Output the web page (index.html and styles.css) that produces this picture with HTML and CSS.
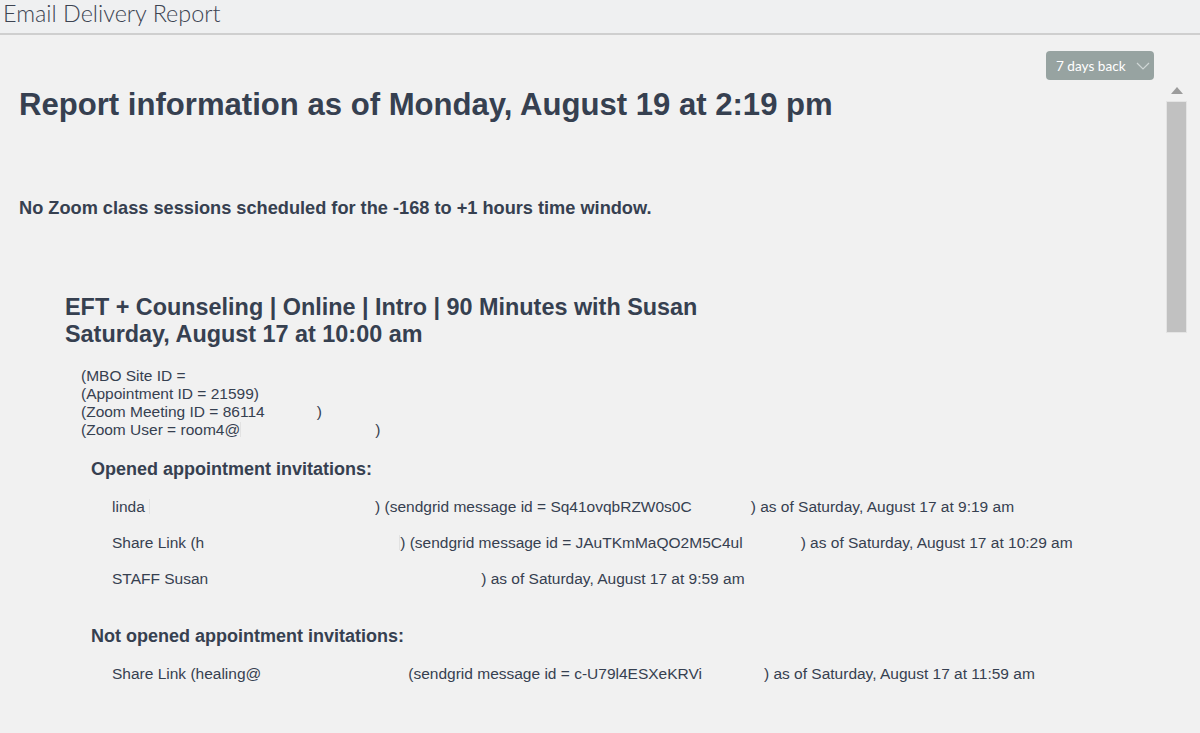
FILE: index.html
```html
<!DOCTYPE html>
<html lang="en">
<head>
    <meta charset="UTF-8">
    <meta name="viewport" content="width=device-width, initial-scale=1.0">
    <title>Email Delivery Report</title>
    <link rel="stylesheet" href="styles.css">
</head>
<body>
    <header class="page-header">Email Delivery Report</header>

    <div class="toolbar">
        <button class="range-select" type="button">
            <span>7 days back</span>
            <svg class="chevron" width="14" height="8" viewBox="0 0 14 8"><path d="M1 1l6 6 6-6" fill="none" stroke="currentColor" stroke-width="1.2"/></svg>
        </button>
    </div>

    <div class="workspace">
        <main class="report-pane">
            <h1>Report information as of Monday, August 19 at 2:19 pm</h1>

            <p class="notice">No Zoom class sessions scheduled for the -168 to +1 hours time window.</p>

            <section class="appointment">
                <h2>EFT + Counseling | Online | Intro | 90 Minutes with Susan<br>Saturday, August 17 at 10:00 am</h2>

                <div class="ids">
                    <div>(MBO Site ID = </div>
                    <div>(Appointment ID = 21599)</div>
                    <div>(Zoom Meeting ID = 86114<span class="blank" style="width:52px"></span>)</div>
                    <div>(Zoom User = room4@<span class="blank edge" style="width:135px"></span>)</div>
                </div>

                <h3>Opened appointment invitations:</h3>
                <ul class="invites">
                    <li>linda <span class="blank edge" style="width:226px"></span>) (sendgrid message id = Sq41ovqbRZW0s0C<span class="blank" style="width:59px"></span>) as of Saturday, August 17 at 9:19 am</li>
                    <li>Share Link (h<span class="blank smudge" style="width:196px"></span>) (sendgrid message id = JAuTKmMaQO2M5C4ul<span class="blank" style="width:58px"></span>) as of Saturday, August 17 at 10:29 am</li>
                    <li>STAFF Susan<span class="blank" style="width:273px"></span>) as of Saturday, August 17 at 9:59 am</li>
                </ul>

                <h3>Not opened appointment invitations:</h3>
                <ul class="invites">
                    <li>Share Link (healing@<span class="blank" style="width:147px"></span>(sendgrid message id = c-U79l4ESXeKRVi<span class="blank" style="width:62px"></span>) as of Saturday, August 17 at 11:59 am</li>
                </ul>
            </section>
        </main>

        <!-- report scroller: up arrow + thumb -->
        <div class="scroll-rail">
            <svg class="scroll-up" width="12" height="7" viewBox="0 0 12 7"><path d="M0 7L6 0l6 7z" fill="#9c9c9c"/></svg>
            <div class="scroll-thumb"></div>
        </div>
    </div>
</body>
</html>
```

FILE: styles.css
```css
html, body {
    height: 100%;
}
body {
    margin: 0;
    display: flex;
    flex-direction: column;
    overflow: hidden;
    font-family: "Liberation Sans", Arial, sans-serif;
    background-color: #f1f1f1;
    color: #364050;
}

/* top bar */
.page-header {
    height: 33px;
    padding-left: 3px;
    border-bottom: 2px solid #cfcfcf;
    font-family: Lato, "Open Sans", sans-serif;
    font-weight: 300;
    font-size: 23.4px;
    line-height: 27px;
    color: #3d4452;
    background-color: #eff0f1;
}

.toolbar {
    display: flex;
    justify-content: flex-end;
    padding: 16px 46px 0 0;
    height: 29px;
}
.range-select {
    display: flex;
    align-items: center;
    gap: 10px;
    width: 108px;
    height: 29px;
    padding: 0 0 0 10px;
    border: none;
    border-radius: 4px;
    background-color: #97a3a1;
    color: #fff;
    font-family: Lato, "Open Sans", sans-serif;
    font-size: 13.6px;
    cursor: pointer;
}
.chevron {
    color: #cfd6d5;
}

/* report area with its scroller */
.workspace {
    flex: 1;
    display: flex;
    min-height: 0;
}
.report-pane {
    flex: 1;
    overflow: hidden;
    padding: 7px 0 0 19px;
}
.scroll-rail {
    width: 21px;
    margin-right: 13px;
    display: flex;
    flex-direction: column;
    align-items: center;
}
.scroll-up {
    margin: 7px 0 7px;
}
.scroll-thumb {
    width: 21px;
    height: 232px;
    box-sizing: border-box;
    background-color: #c1c1c1;
    border: 1px solid #e4e4e4;
}

h1 {
    margin: 0;
    font-size: 31.1px;
    font-weight: bold;
}
.notice {
    margin: 75px 0 0;
    font-size: 18.2px;
    font-weight: bold;
}

.appointment {
    margin: 75px 0 0 46px;
}
h2 {
    margin: 0;
    font-size: 23.4px;
    line-height: 27px;
    font-weight: bold;
}
.ids {
    margin: 19px 0 0 16px;
    font-size: 15.5px;
    line-height: 18px;
}
h3 {
    margin: 20px 0 18px 26px;
    font-size: 18px;
    font-weight: bold;
}
.invites {
    list-style: none;
    margin: 0 0 38px 47px;
    padding: 0;
    font-size: 15.5px;
    line-height: 18px;
}
.invites li {
    margin-bottom: 18px;
    white-space: nowrap;
}

/* hidden address / id fragments */
.blank {
    display: inline-block;
    height: 1em;
    vertical-align: -2px;
}
.blank.edge {
    border-left: 1px solid #e2e2e2;
    box-sizing: border-box;
}
.blank.smudge {
    border-right: 1px solid #e2e2e2;
    box-sizing: border-box;
}
```
